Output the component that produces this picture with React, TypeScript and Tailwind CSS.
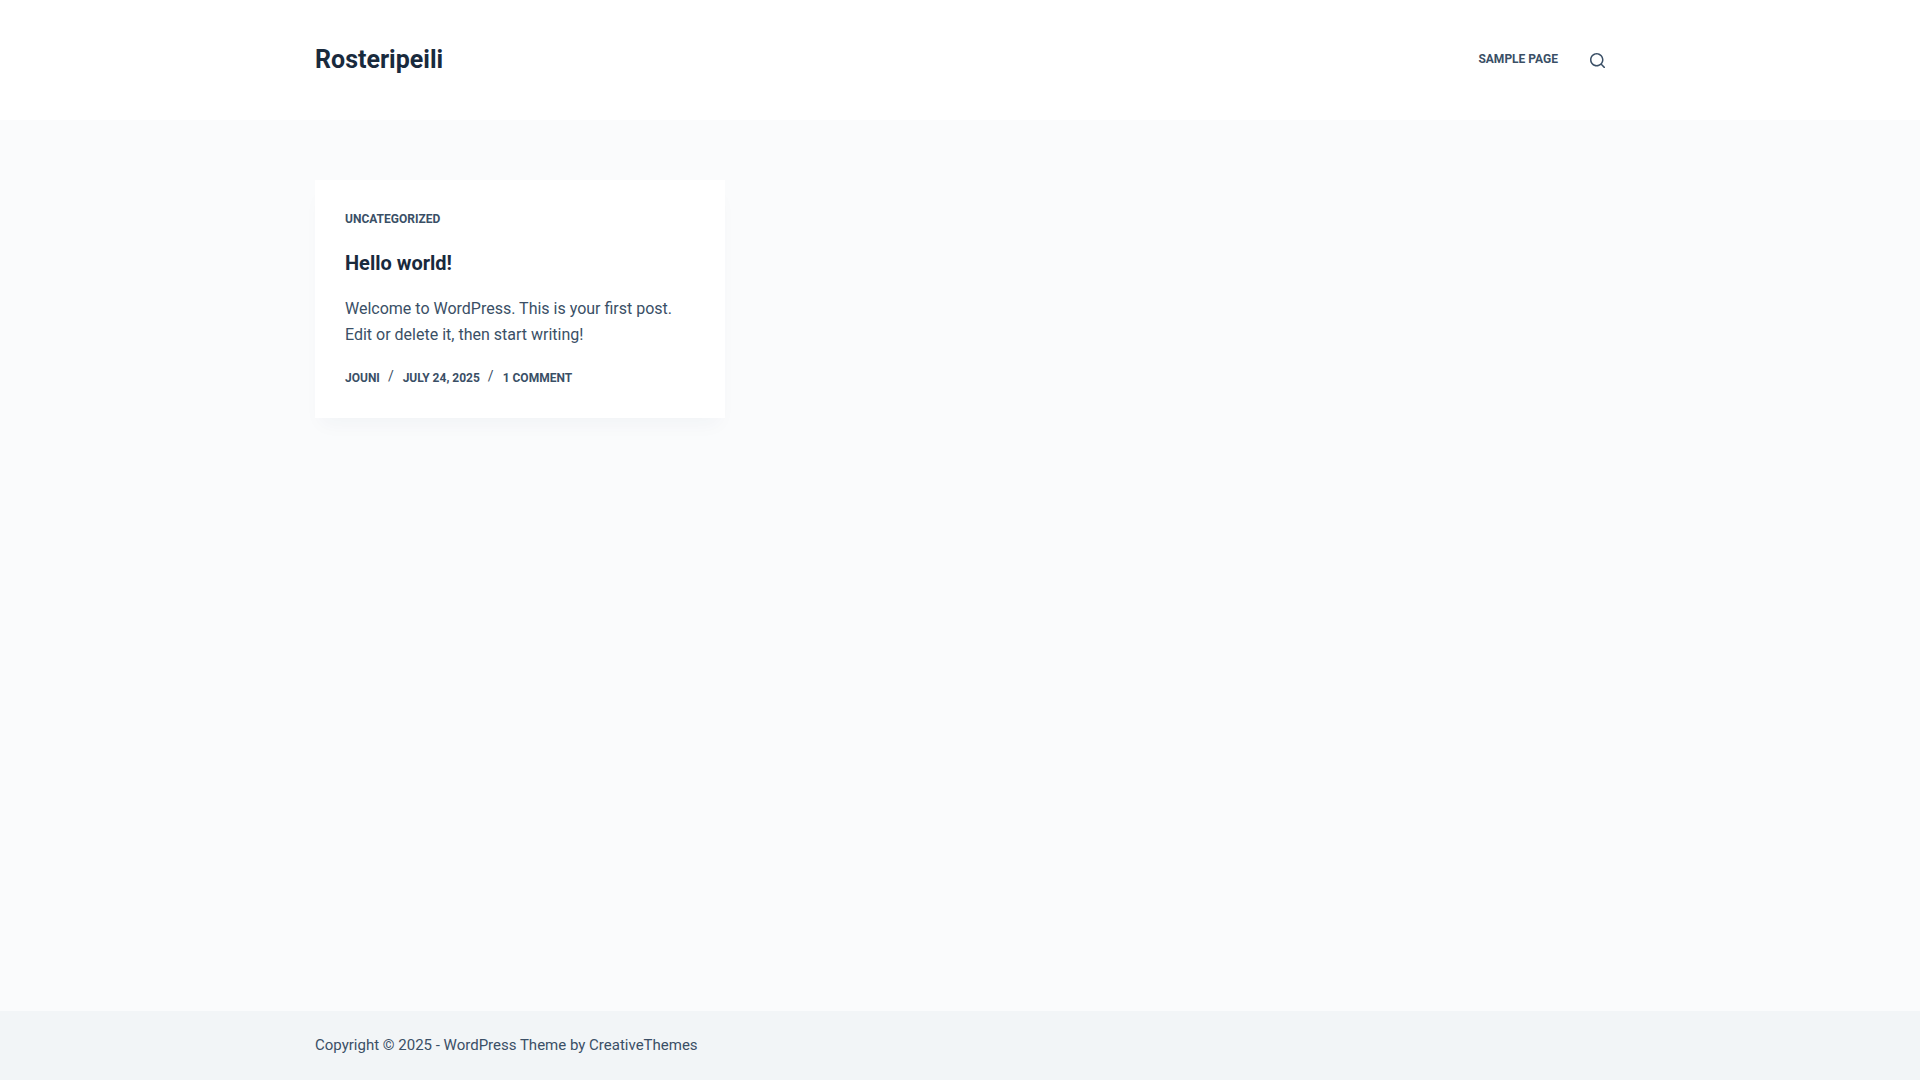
interface Post {
  category: string;
  title: string;
  excerpt: string;
  meta: string[];
}

const posts: Post[] = [
  {
    category: 'Uncategorized',
    title: 'Hello world!',
    excerpt: 'Welcome to WordPress. This is your first post. Edit or delete it, then start writing!',
    meta: ['Jouni', 'July 24, 2025', '1 Comment'],
  },
];

function SearchIcon() {
  return (
    <svg className="w-[15px] h-[15px]" viewBox="0 0 15 15" fill="currentColor" aria-hidden="true">
      <path d="M14.8,13.7L12,11c0.9-1.2,1.5-2.6,1.5-4.2c0-3.7-3-6.8-6.8-6.8S0,3,0,6.8s3,6.8,6.8,6.8c1.6,0,3.1-0.6,4.2-1.5l2.8,2.8c0.1,0.1,0.3,0.2,0.5,0.2s0.4-0.1,0.5-0.2C15.1,14.5,15.1,14,14.8,13.7z M1.5,6.8c0-2.9,2.4-5.2,5.2-5.2S12,3.9,12,6.8S9.6,12,6.8,12S1.5,9.6,1.5,6.8z" />
    </svg>
  );
}

function Header() {
  return (
    <header className="bg-white">
      <div className="max-w-[1290px] mx-auto h-[120px] flex items-center justify-between">
        <a href="#" className="text-[25px] leading-[38px] font-bold text-[#192a3d]">Rosteripeili</a>
        <div className="flex items-center gap-8">
          <nav className="flex pb-0.5">
            <a href="#" className="text-xs leading-[18px] font-bold uppercase">Sample Page</a>
          </nav>
          <button type="button" aria-label="Search" className="pt-px">
            <SearchIcon />
          </button>
        </div>
      </div>
    </header>
  );
}

function PostCard({ post }: { post: Post }) {
  return (
    <article className="bg-white p-[30px] shadow-[0_12px_18px_-6px_rgba(34,56,101,0.04)]">
      <a href="#" className="block text-xs leading-[18px] font-bold uppercase">{post.category}</a>
      <h2 className="mt-5 text-xl leading-[30px] font-bold text-[#192a3d]">
        <a href="#">{post.title}</a>
      </h2>
      <p className="mt-[18px] text-base leading-[26px]">{post.excerpt}</p>
      <ul className="mt-5 flex text-xs leading-5 font-bold uppercase">
        {post.meta.map((item, i) => (
          <li key={item} className="flex">
            {i > 0 && <span className="pl-2 pr-[9px] text-sm leading-4 font-normal">/</span>}
            <a href="#">{item}</a>
          </li>
        ))}
      </ul>
    </article>
  );
}

export default function App() {
  return (
    <div className="min-h-screen flex flex-col bg-[#fafbfc] text-[#3a4f66] font-['Roboto',sans-serif]">
      <Header />
      <main className="grow w-full max-w-[1290px] mx-auto py-[60px]">
        <div className="grid grid-cols-3 items-start gap-[30px]">
          {posts.map((post) => (
            <PostCard key={post.title} post={post} />
          ))}
        </div>
      </main>
      <footer className="bg-[#f2f5f7]">
        <div className="max-w-[1290px] mx-auto py-[22px] text-[15px] leading-[25px]">
          Copyright © 2025 - WordPress Theme by <a href="#">CreativeThemes</a>
        </div>
      </footer>
    </div>
  );
}
